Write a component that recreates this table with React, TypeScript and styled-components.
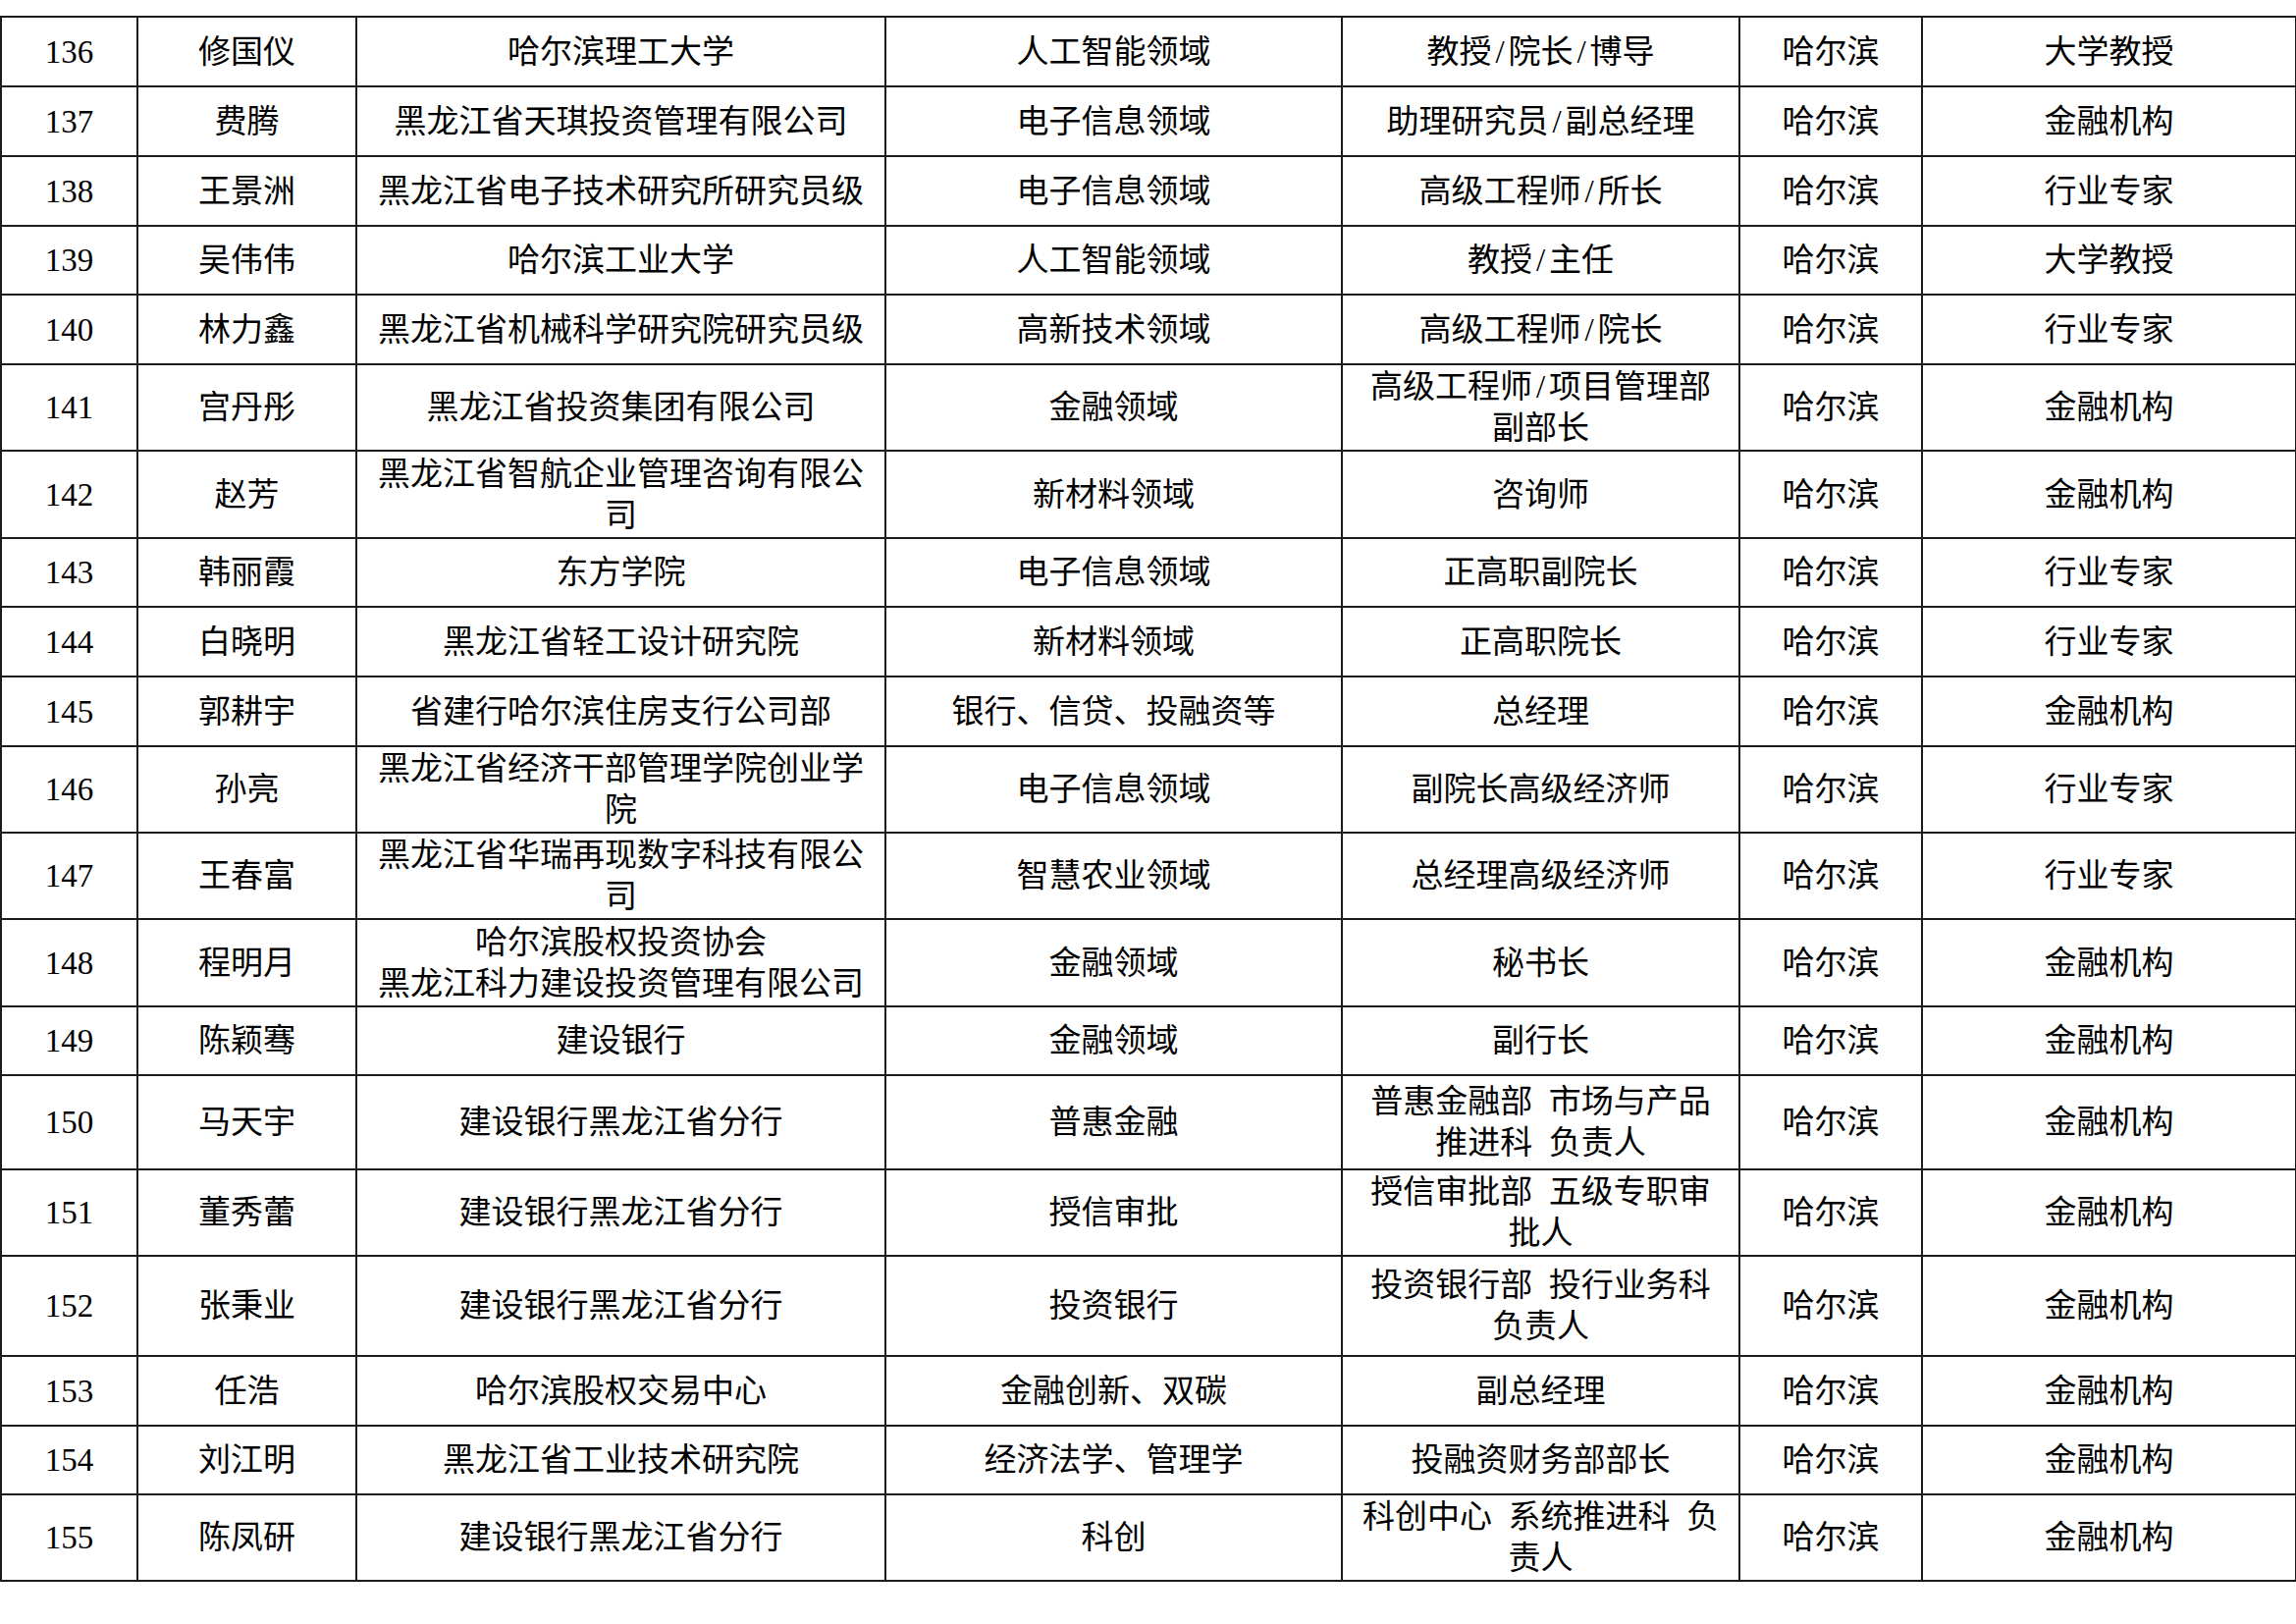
import React from "react";
import styled, { createGlobalStyle } from "styled-components";

const GlobalStyle = createGlobalStyle`
  html, body {
    margin: 0;
    padding: 0;
    background: #fff;
  }
  body {
    font-family: "Liberation Serif", "Noto Sans CJK SC", serif;
    color: #000;
  }
`;

const Page = styled.div`
  width: 2339px;
  min-height: 1654px;
  padding-top: 16px;
  box-sizing: border-box;
  background: #fff;
`;

const Table = styled.table`
  width: 2338px;
  table-layout: fixed;
  border-collapse: collapse;
  font-family: "Liberation Serif", "Noto Sans CJK SC", serif;
  font-size: 33px;
  line-height: 42px;
  color: #000;
`;

const Row = styled.tr<{ $h: number }>`
  height: ${(p) => p.$h}px;
`;

const Cell = styled.td`
  border: 2px solid #1c1c1c;
  padding: 0 10px;
  text-align: center;
  vertical-align: middle;
  white-space: pre;
  overflow: hidden;
`;

// SimSun's slash is half an em wide, Liberation's is narrower
const Slash = styled.span`
  padding: 0 0.12em;
`;

// column widths taken from the grid lines
const cols = [139, 223, 539, 465, 405, 186, 381];

type Expert = {
  no: number;
  name: string;
  org: string[];
  field: string;
  title: string[];
  city: string;
  kind: string;
  h: number;
};

const rows: Expert[] = [
  { no: 136, name: "修国仪", org: ["哈尔滨理工大学"], field: "人工智能领域", title: ["教授/院长/博导"], city: "哈尔滨", kind: "大学教授", h: 71 },
  { no: 137, name: "费腾", org: ["黑龙江省天琪投资管理有限公司"], field: "电子信息领域", title: ["助理研究员/副总经理"], city: "哈尔滨", kind: "金融机构", h: 71 },
  { no: 138, name: "王景洲", org: ["黑龙江省电子技术研究所研究员级"], field: "电子信息领域", title: ["高级工程师/所长"], city: "哈尔滨", kind: "行业专家", h: 71 },
  { no: 139, name: "吴伟伟", org: ["哈尔滨工业大学"], field: "人工智能领域", title: ["教授/主任"], city: "哈尔滨", kind: "大学教授", h: 70 },
  { no: 140, name: "林力鑫", org: ["黑龙江省机械科学研究院研究员级"], field: "高新技术领域", title: ["高级工程师/院长"], city: "哈尔滨", kind: "行业专家", h: 71 },
  { no: 141, name: "宫丹彤", org: ["黑龙江省投资集团有限公司"], field: "金融领域", title: ["高级工程师/项目管理部", "副部长"], city: "哈尔滨", kind: "金融机构", h: 88 },
  { no: 142, name: "赵芳", org: ["黑龙江省智航企业管理咨询有限公", "司"], field: "新材料领域", title: ["咨询师"], city: "哈尔滨", kind: "金融机构", h: 89 },
  { no: 143, name: "韩丽霞", org: ["东方学院"], field: "电子信息领域", title: ["正高职副院长"], city: "哈尔滨", kind: "行业专家", h: 70 },
  { no: 144, name: "白晓明", org: ["黑龙江省轻工设计研究院"], field: "新材料领域", title: ["正高职院长"], city: "哈尔滨", kind: "行业专家", h: 71 },
  { no: 145, name: "郭耕宇", org: ["省建行哈尔滨住房支行公司部"], field: "银行、信贷、投融资等", title: ["总经理"], city: "哈尔滨", kind: "金融机构", h: 71 },
  { no: 146, name: "孙亮", org: ["黑龙江省经济干部管理学院创业学", "院"], field: "电子信息领域", title: ["副院长高级经济师"], city: "哈尔滨", kind: "行业专家", h: 88 },
  { no: 147, name: "王春富", org: ["黑龙江省华瑞再现数字科技有限公", "司"], field: "智慧农业领域", title: ["总经理高级经济师"], city: "哈尔滨", kind: "行业专家", h: 88 },
  { no: 148, name: "程明月", org: ["哈尔滨股权投资协会", "黑龙江科力建设投资管理有限公司"], field: "金融领域", title: ["秘书长"], city: "哈尔滨", kind: "金融机构", h: 89 },
  { no: 149, name: "陈颖骞", org: ["建设银行"], field: "金融领域", title: ["副行长"], city: "哈尔滨", kind: "金融机构", h: 70 },
  { no: 150, name: "马天宇", org: ["建设银行黑龙江省分行"], field: "普惠金融", title: ["普惠金融部  市场与产品", "推进科  负责人"], city: "哈尔滨", kind: "金融机构", h: 96 },
  { no: 151, name: "董秀蕾", org: ["建设银行黑龙江省分行"], field: "授信审批", title: ["授信审批部  五级专职审", "批人"], city: "哈尔滨", kind: "金融机构", h: 88 },
  { no: 152, name: "张秉业", org: ["建设银行黑龙江省分行"], field: "投资银行", title: ["投资银行部  投行业务科", "负责人"], city: "哈尔滨", kind: "金融机构", h: 102 },
  { no: 153, name: "任浩", org: ["哈尔滨股权交易中心"], field: "金融创新、双碳", title: ["副总经理"], city: "哈尔滨", kind: "金融机构", h: 71 },
  { no: 154, name: "刘江明", org: ["黑龙江省工业技术研究院"], field: "经济法学、管理学", title: ["投融资财务部部长"], city: "哈尔滨", kind: "金融机构", h: 70 },
  { no: 155, name: "陈凤研", org: ["建设银行黑龙江省分行"], field: "科创", title: ["科创中心  系统推进科  负", "责人"], city: "哈尔滨", kind: "金融机构", h: 88 },
];

function Line({ text }: { text: string }) {
  const parts = text.split("/");
  return (
    <>
      {parts.map((p, i) => (
        <React.Fragment key={i}>
          {i > 0 && <Slash>/</Slash>}
          {p}
        </React.Fragment>
      ))}
    </>
  );
}

function Lines({ lines }: { lines: string[] }) {
  return (
    <>
      {lines.map((l, i) => (
        <React.Fragment key={i}>
          {i > 0 && <br />}
          <Line text={l} />
        </React.Fragment>
      ))}
    </>
  );
}

export default function App() {
  return (
    <Page>
      <GlobalStyle />
      <Table>
        <colgroup>
          {cols.map((w, i) => (
            <col key={i} style={{ width: w }} />
          ))}
        </colgroup>
        <tbody>
          {rows.map((r) => (
            <Row key={r.no} $h={r.h}>
              <Cell>{r.no}</Cell>
              <Cell>{r.name}</Cell>
              <Cell>
                <Lines lines={r.org} />
              </Cell>
              <Cell>{r.field}</Cell>
              <Cell>
                <Lines lines={r.title} />
              </Cell>
              <Cell>{r.city}</Cell>
              <Cell>{r.kind}</Cell>
            </Row>
          ))}
        </tbody>
      </Table>
    </Page>
  );
}
